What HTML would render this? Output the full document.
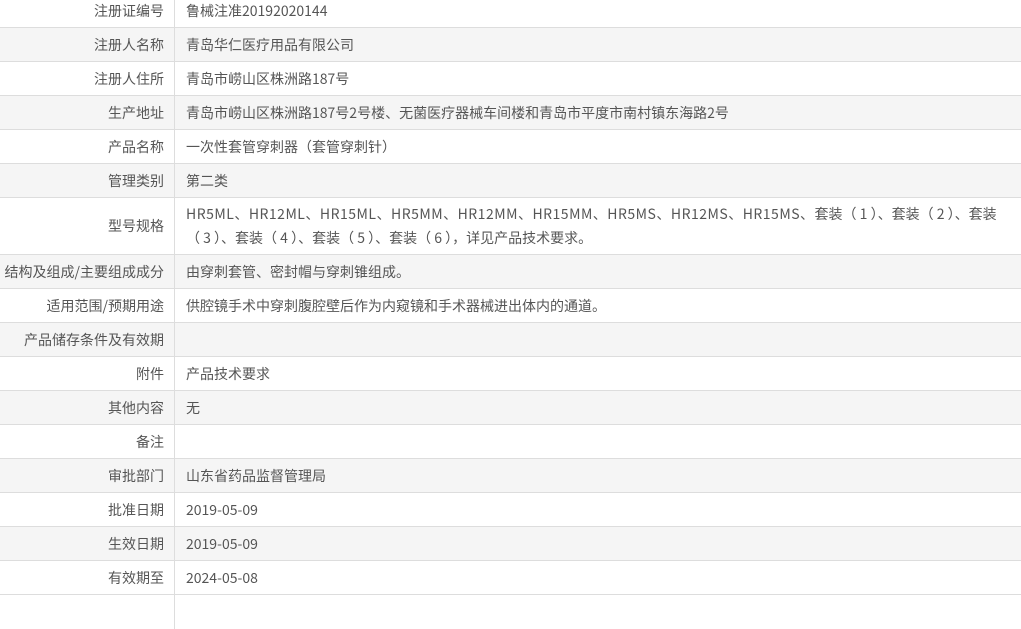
<!DOCTYPE html>
<html><head><meta charset="utf-8"><style>
*{margin:0;padding:0;box-sizing:border-box}
body{width:1021px;height:597px;overflow:hidden;background:#fff;font-family:"Noto Sans CJK SC","Liberation Sans",sans-serif;font-size:14px;color:#555;position:relative}
.r{position:absolute;left:0;width:1021px;border-bottom:1px solid #ddd;display:flex}
.r.g{background:#f5f5f5}
.l{width:175px;border-right:1px solid #ddd;text-align:right;padding-right:10px;display:flex;align-items:center;justify-content:flex-end;white-space:nowrap}
.v{flex:1;padding-left:11px;padding-right:8px;display:flex;align-items:center;line-height:24px}
</style></head><body>
<div class="r" style="top:-5px;height:33px"><div class="l">注册证编号</div><div class="v">鲁械注准20192020144</div></div>
<div class="r g" style="top:28px;height:34px"><div class="l">注册人名称</div><div class="v">青岛华仁医疗用品有限公司</div></div>
<div class="r" style="top:62px;height:34px"><div class="l">注册人住所</div><div class="v">青岛市崂山区株洲路187号</div></div>
<div class="r g" style="top:96px;height:34px"><div class="l">生产地址</div><div class="v">青岛市崂山区株洲路187号2号楼、无菌医疗器械车间楼和青岛市平度市南村镇东海路2号</div></div>
<div class="r" style="top:130px;height:34px"><div class="l">产品名称</div><div class="v">一次性套管穿刺器（套管穿刺针）</div></div>
<div class="r g" style="top:164px;height:34px"><div class="l">管理类别</div><div class="v">第二类</div></div>
<div class="r" style="top:198px;height:57px"><div class="l">型号规格</div><div class="v"><div style="white-space:nowrap"><span style="letter-spacing:0.5px">HR5ML、HR12ML、HR15ML、HR5MM、HR12MM、HR15MM、HR5MS、HR12MS、HR15MS、</span>套装（ 1 ）、套装（ 2 ）、套装<br>（ 3 ）、套装（ 4 ）、套装（ 5 ）、套装（ 6 ），详见产品技术要求。</div></div></div>
<div class="r g" style="top:255px;height:34px"><div class="l">结构及组成/主要组成成分</div><div class="v">由穿刺套管、密封帽与穿刺锥组成。</div></div>
<div class="r" style="top:289px;height:34px"><div class="l">适用范围/预期用途</div><div class="v">供腔镜手术中穿刺腹腔壁后作为内窥镜和手术器械进出体内的通道。</div></div>
<div class="r g" style="top:323px;height:34px"><div class="l">产品储存条件及有效期</div><div class="v"></div></div>
<div class="r" style="top:357px;height:34px"><div class="l">附件</div><div class="v">产品技术要求</div></div>
<div class="r g" style="top:391px;height:34px"><div class="l">其他内容</div><div class="v">无</div></div>
<div class="r" style="top:425px;height:34px"><div class="l">备注</div><div class="v"></div></div>
<div class="r g" style="top:459px;height:34px"><div class="l">审批部门</div><div class="v">山东省药品监督管理局</div></div>
<div class="r" style="top:493px;height:34px"><div class="l">批准日期</div><div class="v">2019-05-09</div></div>
<div class="r g" style="top:527px;height:34px"><div class="l">生效日期</div><div class="v">2019-05-09</div></div>
<div class="r" style="top:561px;height:34px"><div class="l">有效期至</div><div class="v">2024-05-08</div></div>
<div class="r" style="top:595px;height:34px;border:none"><div class="l"></div><div class="v"></div></div>
</body></html>
